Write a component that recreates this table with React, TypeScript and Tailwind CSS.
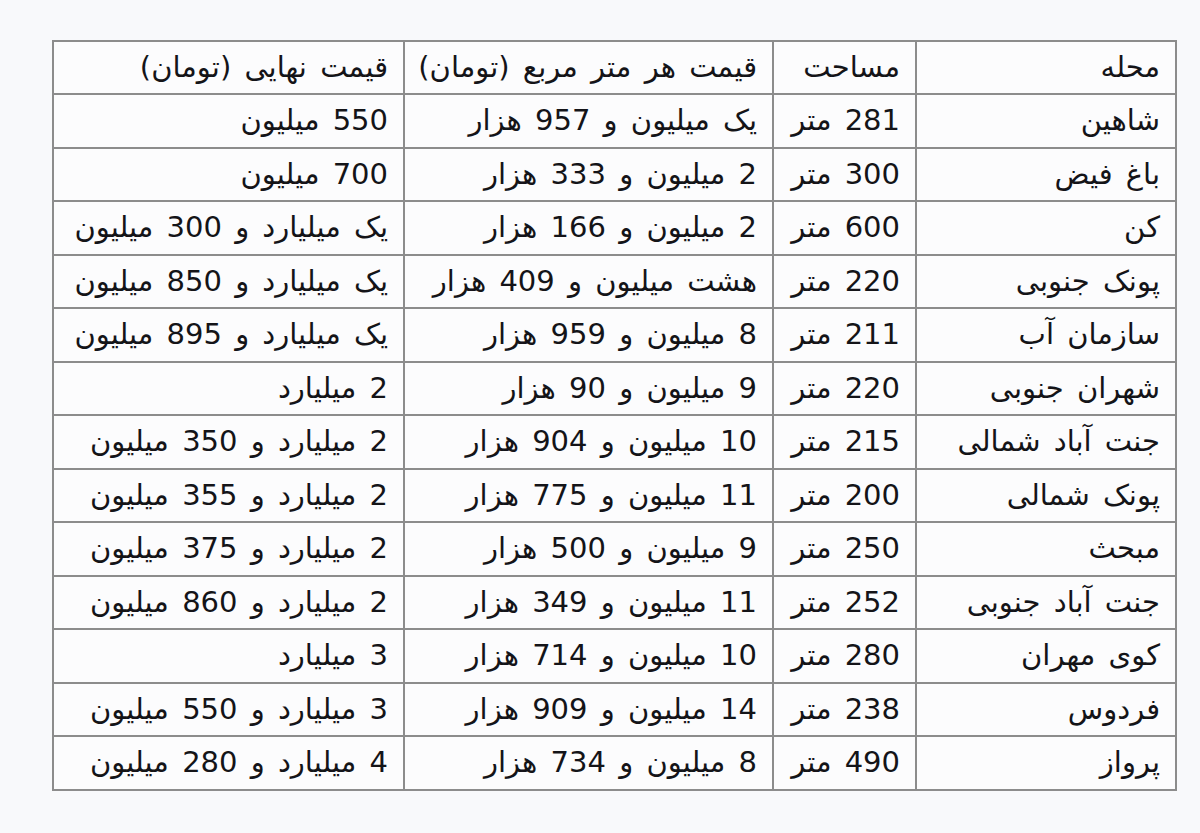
const rows: [string, string, string, string][] = [
    ["شاهین", "281 متر", "یک میلیون و 957 هزار", "550 میلیون"],
    ["باغ فیض", "300 متر", "2 میلیون و 333 هزار", "700 میلیون"],
    ["کن", "600 متر", "2 میلیون و 166 هزار", "یک میلیارد و 300 میلیون"],
    ["پونک جنوبی", "220 متر", "هشت میلیون و 409 هزار", "یک میلیارد و 850 میلیون"],
    ["سازمان آب", "211 متر", "8 میلیون و 959 هزار", "یک میلیارد و 895 میلیون"],
    ["شهران جنوبی", "220 متر", "9 میلیون و 90 هزار", "2 میلیارد"],
    ["جنت آباد شمالی", "215 متر", "10 میلیون و 904 هزار", "2 میلیارد و 350 میلیون"],
    ["پونک شمالی", "200 متر", "11 میلیون و 775 هزار", "2 میلیارد و 355 میلیون"],
    ["مبحث", "250 متر", "9 میلیون و 500 هزار", "2 میلیارد و 375 میلیون"],
    ["جنت آباد جنوبی", "252 متر", "11 میلیون و 349 هزار", "2 میلیارد و 860 میلیون"],
    ["کوی مهران", "280 متر", "10 میلیون و 714 هزار", "3 میلیارد"],
    ["فردوس", "238 متر", "14 میلیون و 909 هزار", "3 میلیارد و 550 میلیون"],
    ["پرواز", "490 متر", "8 میلیون و 734 هزار", "4 میلیارد و 280 میلیون"],
];

const header = ["محله", "مساحت", "قیمت هر متر مربع (تومان)", "قیمت نهایی (تومان)"];
const widths = ["w-[260px]", "w-[143px]", "w-[369px]", "w-[351px]"];

export default function App() {
    return (
        <div className="min-h-[833px] w-[1200px] bg-[#f8f9fb] pt-[40px] pl-[52px] font-['DejaVu_Sans',sans-serif] text-[#141418]">
            <table dir="rtl" className="w-[1123px] table-fixed border-collapse bg-[#fcfcfd] text-[29px] [word-spacing:4px]">
                <thead>
                    <tr className="h-[53px]">
                        {header.map((h, i) => (
                            <th
                                key={h}
                                className={`${widths[i]} border-2 border-[#8c8c8c] px-[15px] text-right font-normal whitespace-nowrap`}
                            >
                                {h}
                            </th>
                        ))}
                    </tr>
                </thead>
                <tbody>
                    {rows.map((r) => (
                        <tr key={r[0]} className="h-[53.5px]">
                            {r.map((c, i) => (
                                <td
                                    key={i}
                                    className="border-2 border-[#8c8c8c] px-[15px] text-right whitespace-nowrap"
                                >
                                    {c}
                                </td>
                            ))}
                        </tr>
                    ))}
                </tbody>
            </table>
        </div>
    );
}
